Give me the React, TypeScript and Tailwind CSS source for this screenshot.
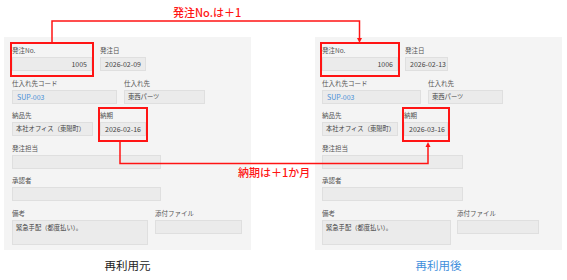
import React from "react";

type Sizes = {
  pl: string;
  r1a: string;
  r1b: string;
  gap1: string;
  r2a: string;
  r2b: string;
  gap2: string;
  r3a: string;
  r3b: string;
  gap3: string;
  r4: string;
  r6a: string;
  r6b: string;
  gap6: string;
};

const LEFT: Sizes = {
  pl: "pl-[8px]",
  r1a: "w-[80px]",
  r1b: "w-[46px]",
  gap1: "gap-[8px]",
  r2a: "w-[105px]",
  r2b: "w-[81px]",
  gap2: "gap-[7px]",
  r3a: "w-[81px]",
  r3b: "w-[46px]",
  gap3: "gap-[7px]",
  r4: "w-[149px]",
  r6a: "w-[136px]",
  r6b: "w-[87px]",
  gap6: "gap-[7px]",
};

const RIGHT: Sizes = {
  pl: "pl-[7px]",
  r1a: "w-[76px]",
  r1b: "w-[43px]",
  gap1: "gap-[7px]",
  r2a: "w-[99px]",
  r2b: "w-[75px]",
  gap2: "gap-[7px]",
  r3a: "w-[76px]",
  r3b: "w-[44px]",
  gap3: "gap-[6px]",
  r4: "w-[141px]",
  r6a: "w-[129px]",
  r6b: "w-[82px]",
  gap6: "gap-[6px]",
};

/* one labelled input */
function Field({
  label,
  value,
  width,
  align = "left",
  blue = false,
  tall = false,
  small = false,
  marked = false,
}: {
  label: string;
  value?: string;
  width: string;
  align?: "left" | "right";
  blue?: boolean;
  tall?: boolean;
  small?: boolean;
  marked?: boolean;
}) {
  return (
    <div className={`relative flex flex-col ${width}`}>
      <div className="h-[10px] text-[6.5px] leading-[10px] text-[#555] whitespace-nowrap">
        {label}
      </div>
      <div
        className={`
          mt-[2px] bg-[#ebebeb] border border-[#dfdfdf]
          whitespace-nowrap overflow-hidden
          ${tall ? "h-[25px] pt-[2px] leading-[9px]" : "h-[14px] leading-[12px]"}
          ${tall || small ? "text-[6.3px] px-[3px]" : "text-[7px] px-[4px]"}
          ${align === "right" ? "text-right" : "text-left"}
          ${blue ? "text-[#4a8fd6]" : "text-[#444]"}
        `}
      >
        {value}
      </div>

      {/* red highlight */}
      {marked && (
        <div className="absolute -left-[2px] -right-[2px] -top-[3px] -bottom-[6px] border-2 border-[#ff1414]" />
      )}
    </div>
  );
}

function Panel({
  s,
  no,
  date,
  due,
}: {
  s: Sizes;
  no: string;
  date: string;
  due: string;
}) {
  return (
    <div className={`w-[247px] h-[213px] bg-[#f4f4f4] pt-[8px] ${s.pl} flex flex-col gap-y-[6.5px]`}>
      <div className={`flex ${s.gap1}`}>
        <Field label="発注No." value={no} width={s.r1a} align="right" marked />
        <Field label="発注日" value={date} width={s.r1b} />
      </div>
      <div className={`flex ${s.gap2}`}>
        <Field label="仕入れ先コード" value="SUP-003" width={s.r2a} blue />
        <Field label="仕入れ先" value="東西パーツ" width={s.r2b} small />
      </div>
      <div className={`flex ${s.gap3}`}>
        <Field label="納品先" value="本社オフィス（東陽町）" width={s.r3a} small />
        <Field label="納期" value={due} width={s.r3b} marked />
      </div>
      <Field label="発注担当" width={s.r4} />
      <Field label="承認者" width={s.r4} />
      <div className={`flex ${s.gap6}`}>
        <Field label="備考" value="緊急手配（都度払い）。" width={s.r6a} tall />
        <Field label="添付ファイル" width={s.r6b} />
      </div>
    </div>
  );
}

export default function App() {
  return (
    <div className="relative w-[567px] h-[280px] bg-white overflow-hidden font-['Noto_Sans_CJK_JP','Noto_Sans',sans-serif]">
      <div className="flex gap-[64px] pt-[37px] pl-[4px]">
        <div className="flex flex-col items-center">
          <Panel s={LEFT} no="1005" date="2026-02-09" due="2026-02-16" />
          <div className="mt-[7px] text-[11.5px] leading-[16px] text-[#222]">再利用元</div>
        </div>
        <div className="flex flex-col items-center">
          <Panel s={RIGHT} no="1006" date="2026-02-13" due="2026-03-16" />
          <div className="mt-[7px] text-[11.5px] leading-[16px] text-[#3f8fdc]">再利用後</div>
        </div>
      </div>

      {/* connector arrows */}
      <svg
        className="absolute inset-0 pointer-events-none"
        width="567"
        height="280"
        viewBox="0 0 567 280"
      >
        <path
          d="M52 42 V21 H359.5 V39"
          fill="none"
          stroke="#ff1414"
          strokeWidth="1.5"
        />
        <polygon points="357,38 362,38 359.5,43" fill="#ff1414" />
        <path
          d="M120 142 V163.5 H428 V146"
          fill="none"
          stroke="#ff1414"
          strokeWidth="1.5"
        />
        <polygon points="425.5,147 430.5,147 428,142" fill="#ff1414" />
      </svg>

      <div className="absolute left-[173px] top-[4px] text-[11px] leading-[16px] font-medium text-[#ff1414] whitespace-nowrap">
        発注No.は＋1
      </div>
      <div className="absolute left-[238px] top-[164px] text-[11px] leading-[16px] font-medium text-[#ff1414] whitespace-nowrap">
        納期は＋1か月
      </div>
    </div>
  );
}
